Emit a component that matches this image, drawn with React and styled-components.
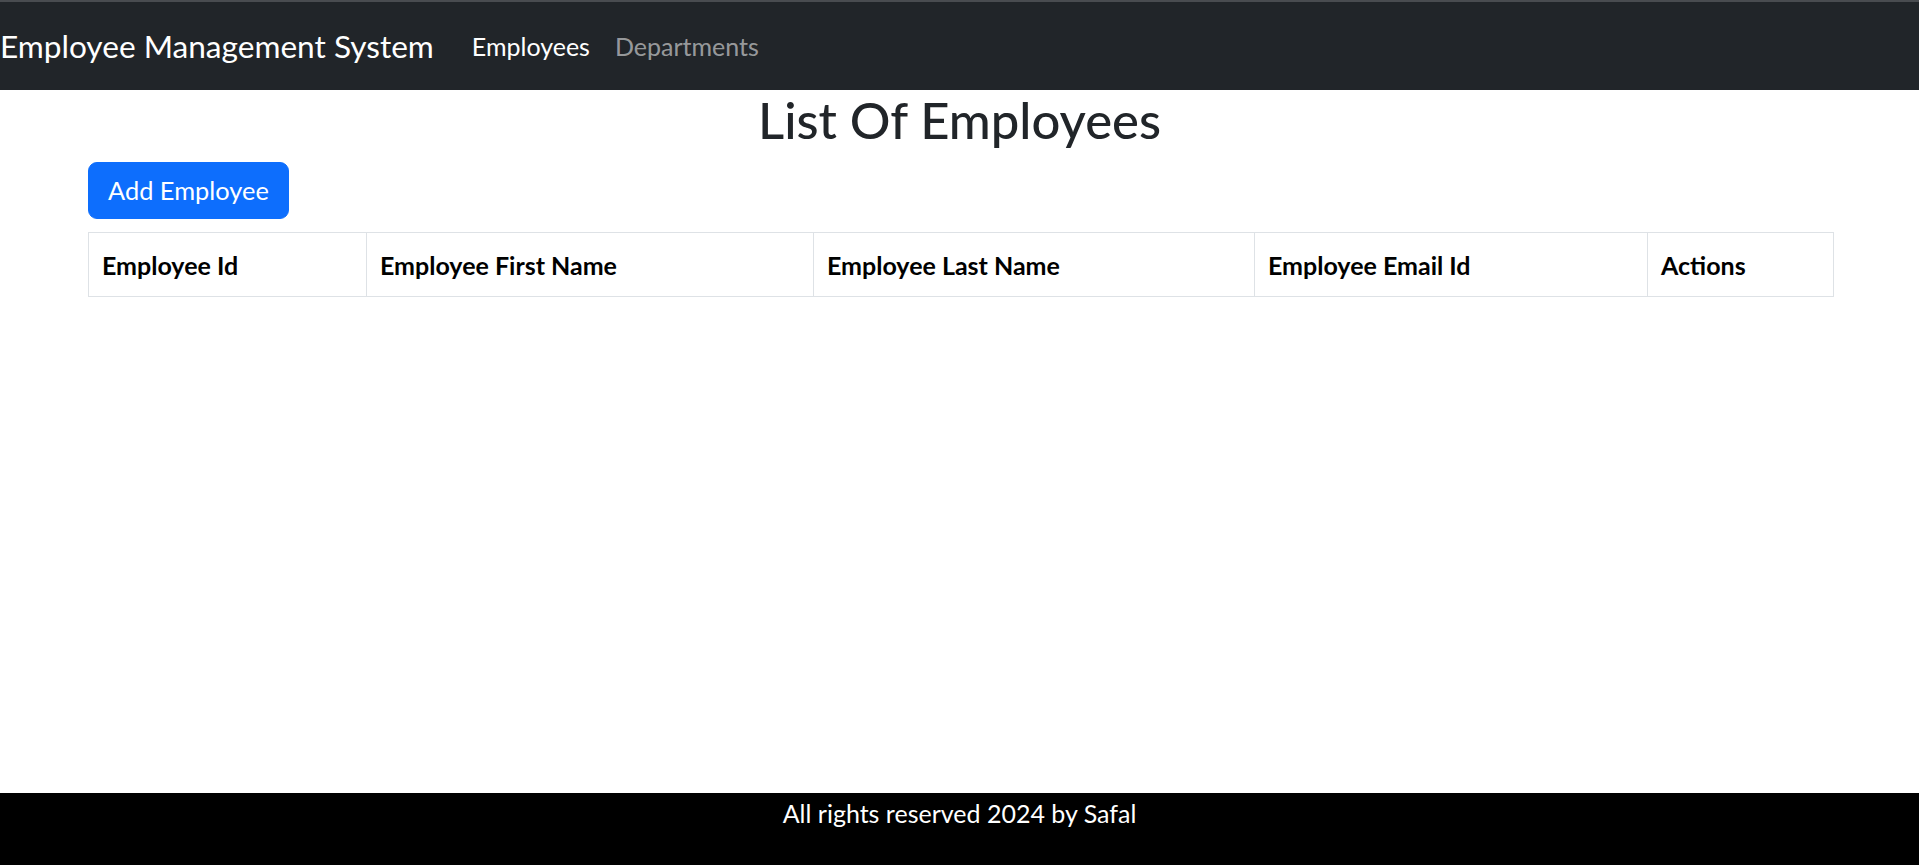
import React from 'react';
import { styled, createGlobalStyle } from 'styled-components';

const GlobalStyle = createGlobalStyle`
  * { box-sizing: border-box; }
  body {
    margin: 0;
    font-family: 'Lato', 'Noto Sans', sans-serif;
    color: #212529;
    background: #ffffff;
  }
`;

const Page = styled.div`
  min-height: 100vh;
  display: flex;
  flex-direction: column;
`;

const NavBar = styled.nav`
  display: flex;
  align-items: center;
  height: 90px;
  background: #212529;
  border-top: 2px solid #494c50;
`;

const Brand = styled.a`
  font-size: 31.6px;
  color: #ffffff;
  margin-right: 38px;
  text-decoration: none;
  white-space: nowrap;
`;

const NavLinks = styled.div`
  display: flex;
  gap: 25px;
`;

const NavLink = styled.a`
  font-size: 25px;
  color: ${props => (props.active ? '#ffffff' : 'rgba(255, 255, 255, 0.55)')};
  text-decoration: none;
`;

const Main = styled.main`
  flex: 1;
  padding: 0 88px;
`;

const Title = styled.h1`
  margin: 0 0 12px;
  text-align: center;
  font-size: 50.8px;
  font-weight: 500;
  line-height: 60px;
  color: #212529;
`;

const Button = styled.button`
  font-family: inherit;
  font-size: 25.4px;
  line-height: 37px;
  padding: 9px 19px;
  color: #ffffff;
  background: #0d6efd;
  border: 1px solid #0d6efd;
  border-radius: 9px;
  cursor: pointer;
`;

const ButtonRow = styled.div`
  margin-bottom: 13px;
`;

const Table = styled.table`
  width: 100%;
  border-collapse: collapse;
  table-layout: fixed;
`;

const HeadCell = styled.th`
  text-align: left;
  font-size: 25px;
  font-weight: 700;
  color: #000000;
  height: 64px;
  padding: 0 13px;
  border: 1px solid #dee2e6;
  white-space: nowrap;
`;

const Footer = styled.footer`
  height: 72px;
  background: #000000;
  color: #ffffff;
  text-align: center;
  font-size: 25px;
  line-height: 40px;
`;

const columns = [
  { label: 'Employee Id', width: 278 },
  { label: 'Employee First Name', width: 447 },
  { label: 'Employee Last Name', width: 441 },
  { label: 'Employee Email Id', width: 393 },
  { label: 'Actions', width: 186 },
];

export default function App() {
  return (
    <Page>
      <GlobalStyle />
      <NavBar>
        <Brand href="#">Employee Management System</Brand>
        <NavLinks>
          <NavLink href="#" active>Employees</NavLink>
          <NavLink href="#">Departments</NavLink>
        </NavLinks>
      </NavBar>
      <Main>
        <Title>List Of Employees</Title>
        <ButtonRow>
          <Button>Add Employee</Button>
        </ButtonRow>
        <Table>
          <colgroup>
            {columns.map(c => (
              <col key={c.label} style={{ width: c.width }} />
            ))}
          </colgroup>
          <thead>
            <tr>
              {columns.map(c => (
                <HeadCell key={c.label}>{c.label}</HeadCell>
              ))}
            </tr>
          </thead>
          <tbody />
        </Table>
      </Main>
      <Footer>All rights reserved 2024 by Safal</Footer>
    </Page>
  );
}
